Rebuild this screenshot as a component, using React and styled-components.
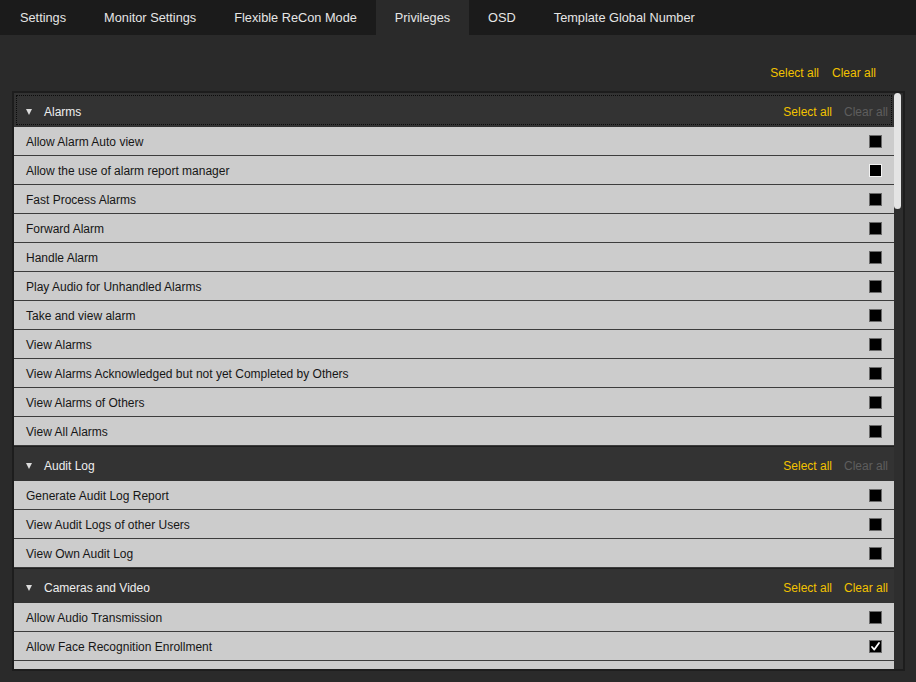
import React from 'react'
import styled, { createGlobalStyle } from 'styled-components'

const GlobalStyle = createGlobalStyle`
  html, body {
    margin: 0;
    padding: 0;
    background: #2a2a2a;
    font-family: "Liberation Sans", Arial, sans-serif;
    overflow: hidden;
  }
`

const yellow = '#f2c200'

const Page = styled.div`
  width: 916px;
  height: 682px;
  display: flex;
  flex-direction: column;
`

const TabBar = styled.div`
  display: flex;
  height: 35px;
  background: #1b1b1b;
  padding-left: 1px;
  flex-shrink: 0;
`

const Tab = styled.div`
  display: flex;
  align-items: center;
  padding: 0 19px 1px;
  font-size: 12.75px;
  color: #e6e6e6;
  background: ${props => (props.active ? '#2a2a2a' : 'transparent')};
  cursor: pointer;
`

const Toolbar = styled.div`
  height: 56px;
  flex-shrink: 0;
  display: flex;
  justify-content: flex-end;
  align-items: flex-end;
  gap: 13px;
  padding: 0 40px 11px 0;
  box-sizing: border-box;
`

const Link = styled.span`
  font-size: 12px;
  color: ${props => (props.disabled ? '#5e5e5e' : yellow)};
  cursor: ${props => (props.disabled ? 'default' : 'pointer')};
`

const Panel = styled.div`
  margin: 0 11px 0 12px;
  height: 580px;
  box-sizing: border-box;
  border: 2px solid #1d1d1d;
  display: flex;
  background: #2e2e2e;
`

const List = styled.div`
  flex: 1;
  overflow: hidden;
`

const Track = styled.div`
  width: 8px;
  background: #2e2e2e;
  padding: 0 1px 0 0;
  display: flex;
  flex-direction: column;
`

const Thumb = styled.div`
  height: 116px;
  width: 7px;
  background: #e4e4e4;
  border-radius: 4px;
`

const SectionHeader = styled.div`
  height: ${props => (props.first ? '34px' : '35px')};
  box-sizing: border-box;
  display: flex;
  align-items: center;
  padding: 4px 6px 0 12px;
  background: #333333;
  border-top: ${props => (props.first ? 'none' : '1px solid #1f1f1f')};
  outline: ${props => (props.focused ? '1px dotted #0c0c0c' : 'none')};
  outline-offset: -3px;
`

const Caret = styled.span`
  width: 0;
  height: 0;
  border-left: 3.5px solid transparent;
  border-right: 3.5px solid transparent;
  border-top: 6px solid #dcdcdc;
  margin: 0 12px 0 0;
`

const SectionTitle = styled.span`
  flex: 1;
  font-size: 12px;
  color: #eeeeee;
`

const HeaderActions = styled.div`
  display: flex;
  gap: 12px;
`

const Row = styled.div`
  display: flex;
  align-items: center;
  justify-content: space-between;
  padding: 1px 13px 0 12px;
  height: 27px;
  background: #cccccc;
  border-bottom: 1px solid #3c3c3c;
  font-size: 12px;
  color: #161616;
`

const Box = styled.span`
  width: 13px;
  height: 13px;
  box-sizing: border-box;
  border: 1px solid ${props => (props.hot ? '#f2f2f2' : '#6a6a6a')};
  background: #000;
  display: flex;
  align-items: center;
  justify-content: center;
  margin-right: -1px;
`

const Check = () => (
  <svg width="11" height="11" viewBox="0 0 11 11">
    <path d="M2 6 L4.3 8.6 L9 2" fill="none" stroke="#fff" strokeWidth="1.8" strokeLinecap="round" strokeLinejoin="round" />
  </svg>
)

const sections = [
  {
    title: 'Alarms',
    clearDisabled: true,
    focused: true,
    items: [
      { label: 'Allow Alarm Auto view' },
      { label: 'Allow the use of alarm report manager', hot: true },
      { label: 'Fast Process Alarms' },
      { label: 'Forward Alarm' },
      { label: 'Handle Alarm' },
      { label: 'Play Audio for Unhandled Alarms' },
      { label: 'Take and view alarm' },
      { label: 'View Alarms' },
      { label: 'View Alarms Acknowledged but not yet Completed by Others' },
      { label: 'View Alarms of Others' },
      { label: 'View All Alarms' },
    ],
  },
  {
    title: 'Audit Log',
    clearDisabled: true,
    items: [
      { label: 'Generate Audit Log Report' },
      { label: 'View Audit Logs of other Users' },
      { label: 'View Own Audit Log' },
    ],
  },
  {
    title: 'Cameras and Video',
    items: [
      { label: 'Allow Audio Transmission' },
      { label: 'Allow Face Recognition Enrollment', checked: true },
      { label: '', checked: true },
    ],
  },
]

const tabs = ['Settings', 'Monitor Settings', 'Flexible ReCon Mode', 'Privileges', 'OSD', 'Template Global Number']

const App = () => (
  <Page>
    <GlobalStyle />
    <TabBar>
      {tabs.map(t => (
        <Tab key={t} active={t === 'Privileges'}>{t}</Tab>
      ))}
    </TabBar>
    <Toolbar>
      <Link>Select all</Link>
      <Link>Clear all</Link>
    </Toolbar>
    <Panel>
      <List>
        {sections.map((s, i) => (
          <div key={s.title}>
            <SectionHeader first={i === 0} focused={s.focused}>
              <Caret />
              <SectionTitle>{s.title}</SectionTitle>
              <HeaderActions>
                <Link>Select all</Link>
                <Link disabled={s.clearDisabled}>Clear all</Link>
              </HeaderActions>
            </SectionHeader>
            {s.items.map((item, j) => (
              <Row key={j}>
                <span>{item.label}</span>
                <Box hot={item.hot}>{item.checked && <Check />}</Box>
              </Row>
            ))}
          </div>
        ))}
      </List>
      <Track>
        <Thumb />
      </Track>
    </Panel>
  </Page>
)

export default App
